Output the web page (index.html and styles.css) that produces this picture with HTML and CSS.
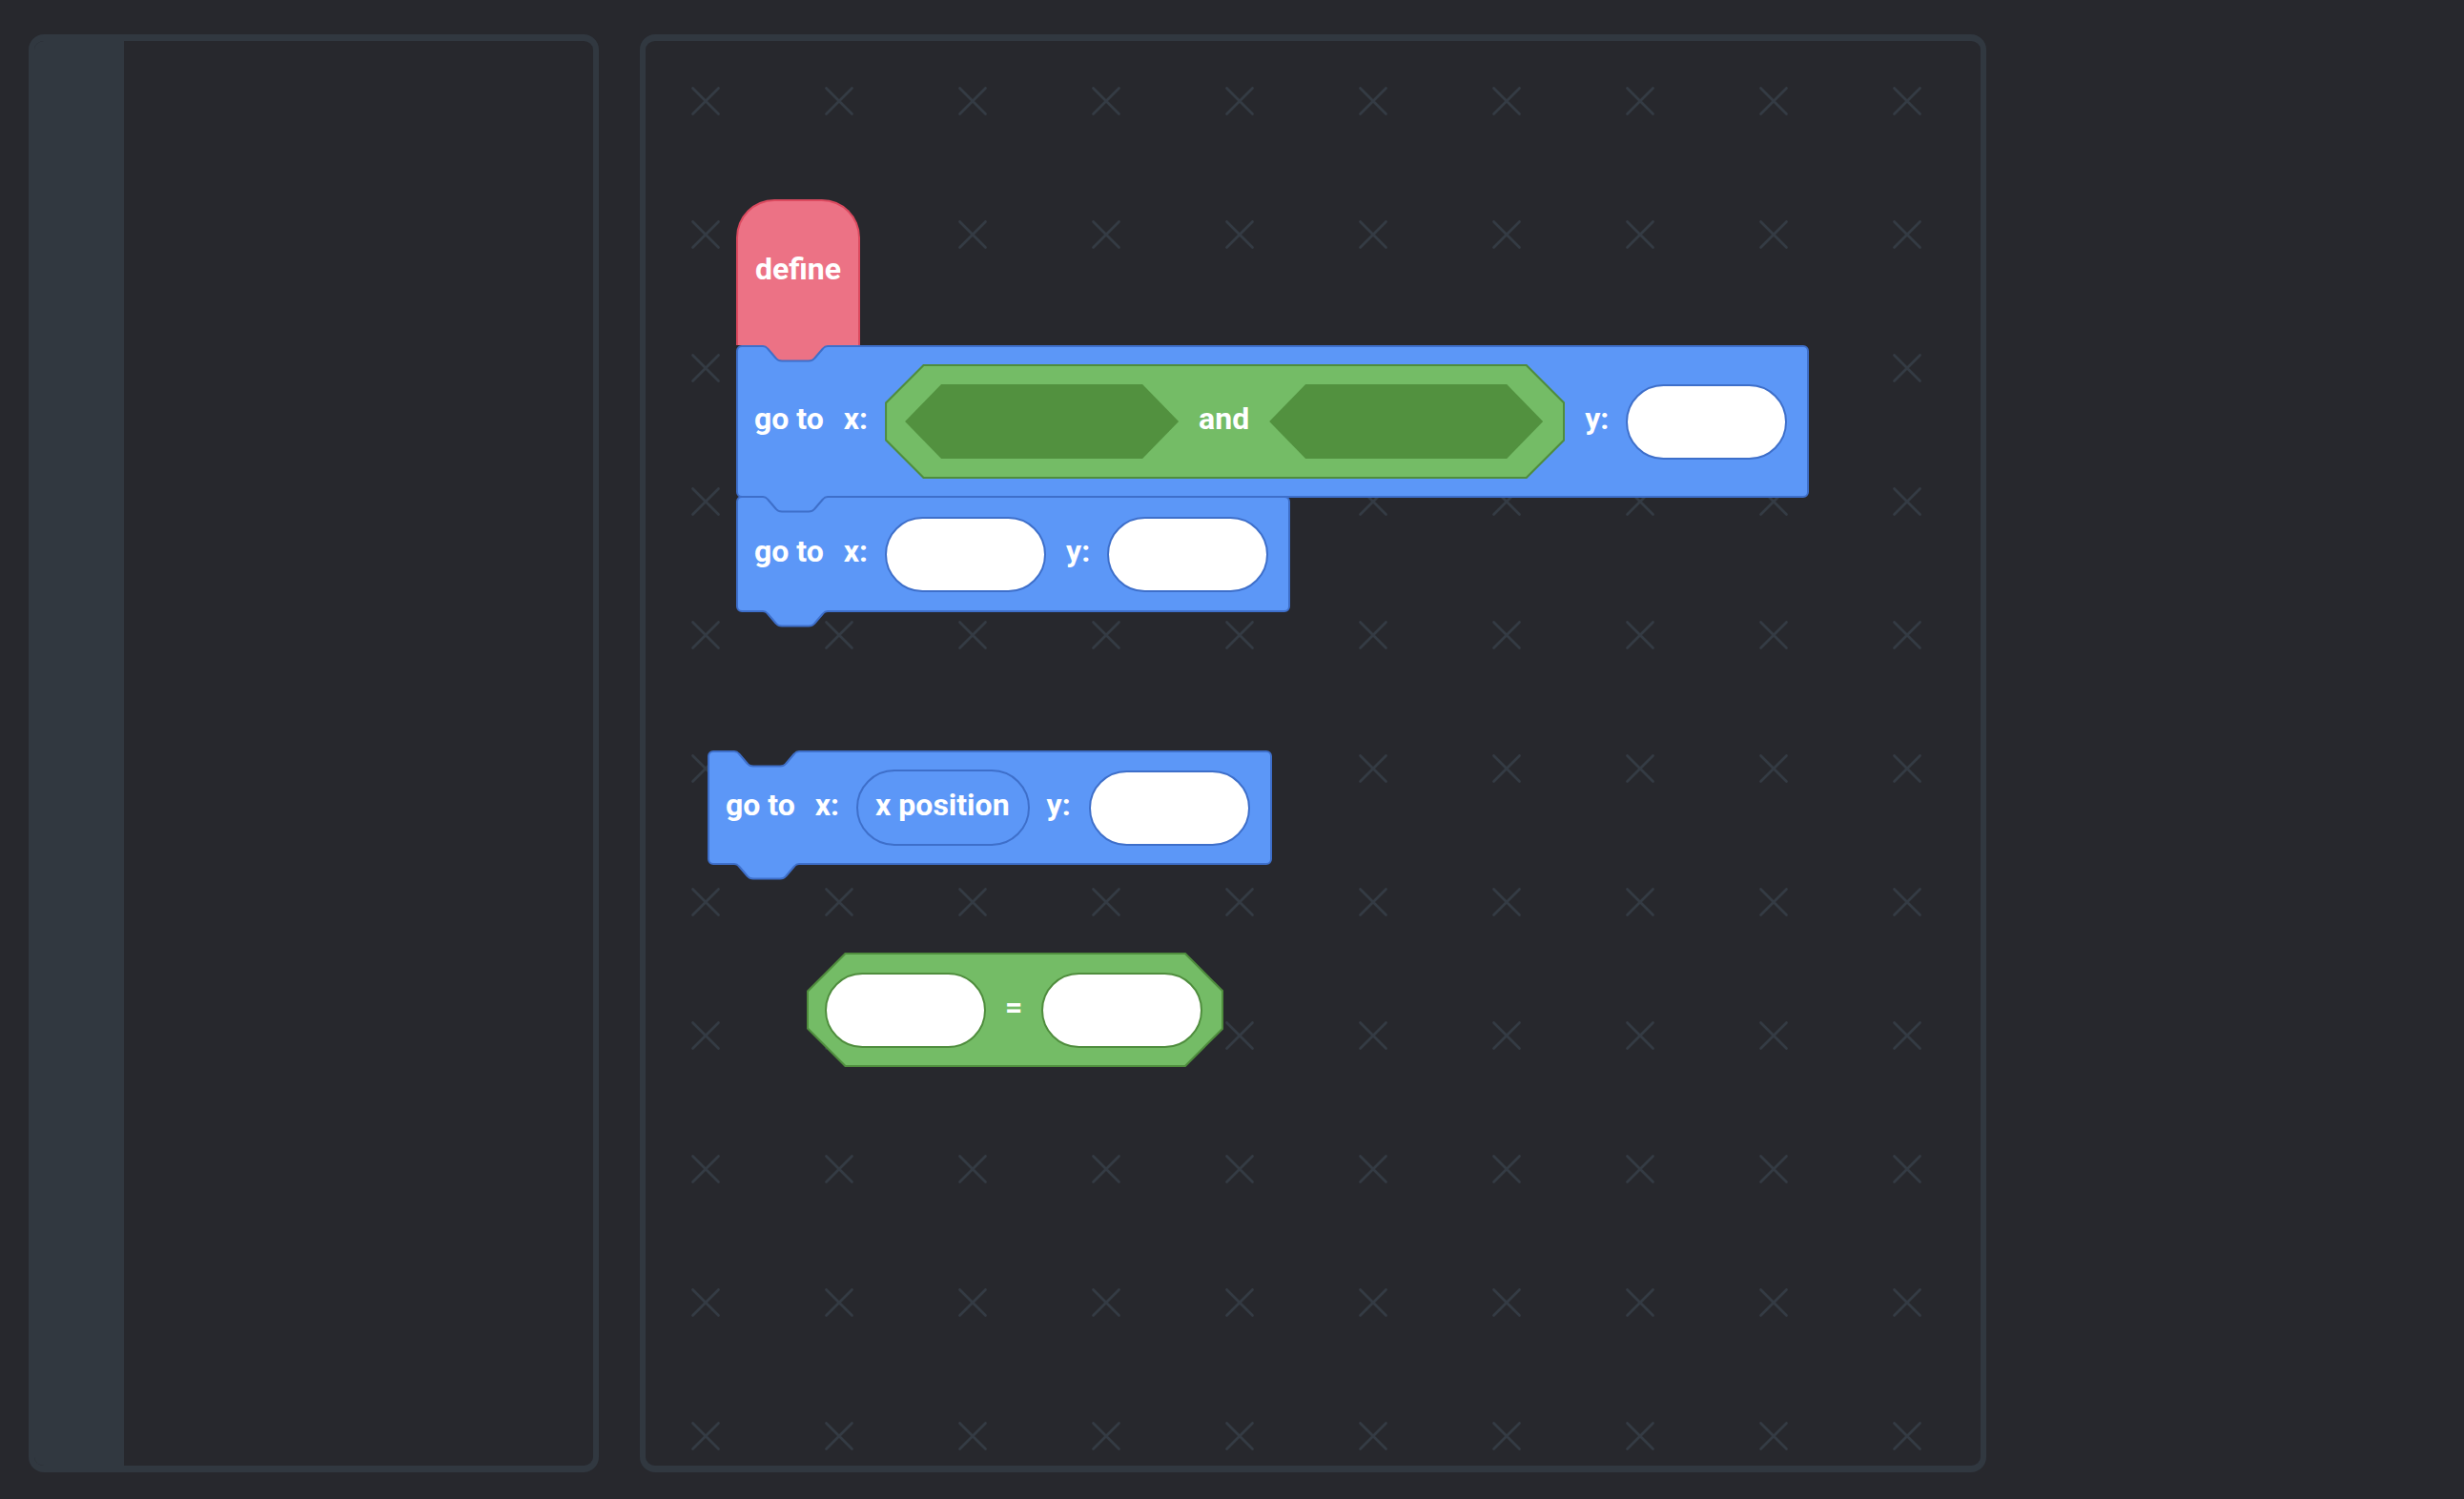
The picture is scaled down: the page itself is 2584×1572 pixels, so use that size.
FILE: index.html
```html
<!DOCTYPE html>
<html lang="en">
<head>
<meta charset="utf-8">
<title>Blocks workspace</title>
<link rel="stylesheet" href="styles.css">
</head>
<body>
<div class="app">
  <aside class="toolbox">
    <div class="flyout"></div>
    <div class="toolbox-body"></div>
  </aside>
  <main class="workspace">
    <svg class="grid" xmlns="http://www.w3.org/2000/svg">
      <defs>
        <pattern id="cross" width="140" height="140" patternUnits="userSpaceOnUse">
          <path d="M49.5 49.5 L76.5 76.5 M76.5 49.5 L49.5 76.5" stroke="#343b44" stroke-width="2.6" stroke-linecap="round" fill="none"/>
        </pattern>
      </defs>
      <rect width="100%" height="100%" fill="url(#cross)"/>
    </svg>

    <div class="stack stack-a">
      <div class="hat">
        <span class="label">define</span>
        <svg class="tab tab-bottom" width="76" height="20" viewBox="0 0 76 20">
          <path class="tab-fill pink" d="M0 0 L0 1 L4 1 Q7 1 9 3.5 L18 14 Q20 16.5 24 16.5 L52 16.5 Q56 16.5 58 14 L67 3.5 Q69 1 72 1 L76 1 L76 0 Z"/>
          <path class="tab-line" d="M0 1 L4 1 Q7 1 9 3.5 L18 14 Q20 16.5 24 16.5 L52 16.5 Q56 16.5 58 14 L67 3.5 Q69 1 72 1 L76 1"/>
        </svg>
      </div>
      <div class="block block-tall">
        <span class="label">go to</span>
        <span class="label key">x:</span>
        <div class="bool bool-and">
          <div class="bool-in">
            <div class="hex"></div>
            <span class="label">and</span>
            <div class="hex"></div>
          </div>
        </div>
        <span class="label key">y:</span>
        <div class="slot"></div>
        <svg class="tab tab-bottom" width="76" height="20" viewBox="0 0 76 20">
          <path class="tab-fill blue" d="M0 0 L0 1 L4 1 Q7 1 9 3.5 L18 14 Q20 16.5 24 16.5 L52 16.5 Q56 16.5 58 14 L67 3.5 Q69 1 72 1 L76 1 L76 0 Z"/>
          <path class="tab-line" d="M0 1 L4 1 Q7 1 9 3.5 L18 14 Q20 16.5 24 16.5 L52 16.5 Q56 16.5 58 14 L67 3.5 Q69 1 72 1 L76 1"/>
        </svg>
      </div>
      <div class="block block-next">
        <span class="label">go to</span>
        <span class="label key">x:</span>
        <div class="slot"></div>
        <span class="label key">y:</span>
        <div class="slot"></div>
        <svg class="tab tab-bottom" width="76" height="20" viewBox="0 0 76 20">
          <path class="tab-fill blue" d="M0 0 L0 1 L4 1 Q7 1 9 3.5 L18 14 Q20 16.5 24 16.5 L52 16.5 Q56 16.5 58 14 L67 3.5 Q69 1 72 1 L76 1 L76 0 Z"/>
          <path class="tab-line" d="M0 1 L4 1 Q7 1 9 3.5 L18 14 Q20 16.5 24 16.5 L52 16.5 Q56 16.5 58 14 L67 3.5 Q69 1 72 1 L76 1"/>
        </svg>
      </div>
    </div>

    <div class="stack stack-b">
      <div class="block">
        <svg class="tab tab-top" width="76" height="20" viewBox="0 0 76 20">
          <path class="tab-fill bg" d="M0 0 L0 1 L4 1 Q7 1 9 3.5 L18 14 Q20 16.5 24 16.5 L52 16.5 Q56 16.5 58 14 L67 3.5 Q69 1 72 1 L76 1 L76 0 Z"/>
          <path class="tab-line" d="M0 1 L4 1 Q7 1 9 3.5 L18 14 Q20 16.5 24 16.5 L52 16.5 Q56 16.5 58 14 L67 3.5 Q69 1 72 1 L76 1"/>
        </svg>
        <span class="label">go to</span>
        <span class="label key">x:</span>
        <div class="reporter"><span class="label">x position</span></div>
        <span class="label key tight">y:</span>
        <div class="slot"></div>
        <svg class="tab tab-bottom" width="76" height="20" viewBox="0 0 76 20">
          <path class="tab-fill blue" d="M0 0 L0 1 L4 1 Q7 1 9 3.5 L18 14 Q20 16.5 24 16.5 L52 16.5 Q56 16.5 58 14 L67 3.5 Q69 1 72 1 L76 1 L76 0 Z"/>
          <path class="tab-line" d="M0 1 L4 1 Q7 1 9 3.5 L18 14 Q20 16.5 24 16.5 L52 16.5 Q56 16.5 58 14 L67 3.5 Q69 1 72 1 L76 1"/>
        </svg>
      </div>
    </div>

    <div class="stack stack-c">
      <div class="bool bool-eq">
        <div class="bool-in">
          <div class="slot slot-green"></div>
          <span class="label">=</span>
          <div class="slot slot-green"></div>
        </div>
      </div>
    </div>
  </main>
</div>
</body>
</html>
```

FILE: styles.css
```css
html, body {
  margin: 0;
  padding: 0;
}

body {
  width: 2584px;
  height: 1572px;
  overflow: hidden;
  background: #27282d;
  font-family: Roboto, "Noto Sans", "Liberation Sans", sans-serif;
}

.app {
  display: flex;
  align-items: flex-start;
  gap: 43px;
  padding: 36px 0 0 30px;
}

/* ---------- toolbox (left panel) ---------- */
.toolbox {
  box-sizing: border-box;
  width: 598px;
  height: 1508px;
  border: 6px solid #313840;
  border-top-width: 7px;
  border-bottom-width: 7px;
  border-radius: 16px;
  background: #27282d;
  display: flex;
  overflow: hidden;
}

.flyout {
  width: 94px;
  background: #313840;
}

.toolbox-body {
  flex: 1;
}

/* ---------- workspace (right panel) ---------- */
.workspace {
  position: relative;
  box-sizing: border-box;
  width: 1412px;
  height: 1508px;
  border: 6px solid #313840;
  border-top-width: 7px;
  border-bottom-width: 7px;
  border-radius: 16px;
  background: #27282d;
  overflow: hidden;
}

.grid {
  position: absolute;
  left: 0;
  top: 0;
  width: 100%;
  height: 100%;
}

.stack {
  position: absolute;
  display: flex;
  flex-direction: column;
  align-items: flex-start;
}

.stack-a { left: 95px; top: 166px; }
.stack-b { left: 65px; top: 744px; }
.stack-c { left: 169px; top: 956px; }

/* ---------- text ---------- */
.label {
  color: #ffffff;
  font-size: 32px;
  font-weight: 700;
  line-height: 40px;
  white-space: nowrap;
}

.block .label,
.bool .label,
.reporter .label {
  padding-bottom: 6px;
}

.key {
  margin-right: -3px;
}

.key.tight {
  margin-left: -3px;
  margin-right: -2px;
}

/* ---------- define hat ---------- */
.hat {
  position: relative;
  box-sizing: border-box;
  width: 130px;
  height: 153px;
  padding-top: 51px;
  background: #ec7285;
  border: 2px solid #dc4a5f;
  border-bottom: 0;
  border-radius: 40px 40px 0 0;
  display: flex;
  justify-content: center;
  align-items: flex-start;
}

/* ---------- command block ---------- */
.block {
  position: relative;
  box-sizing: border-box;
  height: 120px;
  display: flex;
  align-items: center;
  gap: 21px;
  padding: 0 21px 0 17px;
  background: #5c97f7;
  border: 2px solid #3e6fca;
  border-radius: 6px;
}

.block-tall {
  height: 160px;
}

.block-next {
  margin-top: -2px;
  height: 122px;
}

/* notch / tab pieces */
.tab {
  position: absolute;
  left: 22px;
  overflow: visible;
  z-index: 1;
}

.tab-bottom { top: 100%; }
.tab-top { top: -2px; }

.tab-fill.pink { fill: #ec7285; }
.tab-fill.blue { fill: #5c97f7; }
.tab-fill.bg   { fill: #27282d; }

.tab-line {
  fill: none;
  stroke: #3e6fca;
  stroke-width: 2;
}

/* ---------- inputs ---------- */
.slot {
  box-sizing: border-box;
  width: 169px;
  height: 79px;
  background: #ffffff;
  border: 2px solid #3e6fca;
  border-radius: 40px;
  flex: none;
}

.slot-green {
  border-color: #4f8d3d;
}

.reporter {
  box-sizing: border-box;
  height: 80px;
  padding: 0 19px 0 18px;
  display: flex;
  align-items: center;
  background: #5c97f7;
  border: 2px solid #3e6fca;
  border-radius: 40px;
}

/* ---------- boolean (octagon) blocks ---------- */
.bool {
  box-sizing: border-box;
  height: 120px;
  padding: 2px;
  background: #4f8d3d;
  clip-path: polygon(40px 0, calc(100% - 40px) 0, 100% 40px, 100% calc(100% - 40px), calc(100% - 40px) 100%, 40px 100%, 0 calc(100% - 40px), 0 40px);
  flex: none;
}

.bool-in {
  height: 100%;
  display: flex;
  align-items: center;
  background: #74bc66;
  clip-path: polygon(39px 0, calc(100% - 39px) 0, 100% 39px, 100% calc(100% - 39px), calc(100% - 39px) 100%, 39px 100%, 0 calc(100% - 39px), 0 39px);
}

.bool-and .bool-in {
  gap: 21px;
  padding: 0 21px 0 19px;
}

.bool-eq .bool-in {
  gap: 20px;
  padding: 0 20px 0 17px;
}

.hex {
  width: 287px;
  height: 78px;
  background: #52913f;
  clip-path: polygon(38px 0, calc(100% - 38px) 0, 100% 50%, calc(100% - 38px) 100%, 38px 100%, 0 50%);
  flex: none;
}
```
